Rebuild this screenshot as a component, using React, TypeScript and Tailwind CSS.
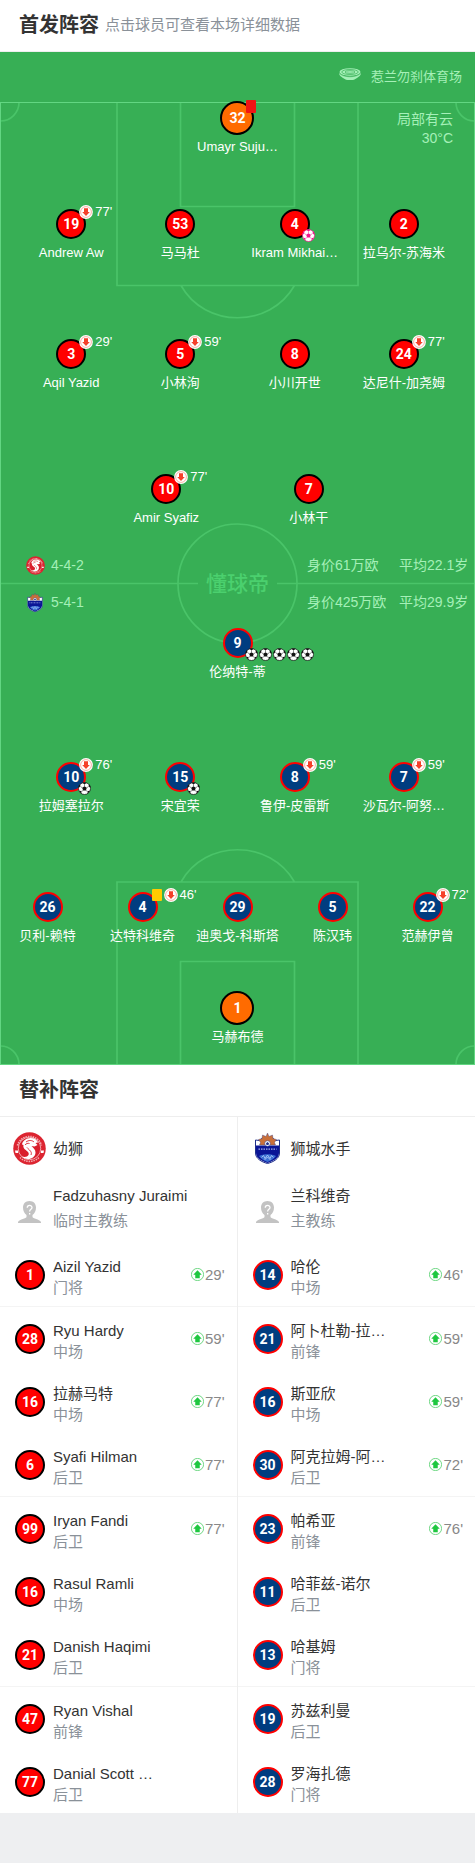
import React from 'react';

type Side = 'home' | 'away' | 'keeper';

interface Player {
  no: number;
  name: string;
  side: Side;
  card?: 'red' | 'yellow';
  off?: number;
  goals?: number;
  assistBall?: boolean;
}

interface Sub {
  no: number;
  name: string;
  role: string;
  on?: number;
}

const home = (no: number, name: string, extra: Partial<Player> = {}): Player => ({ no, name, side: 'home', ...extra });
const away = (no: number, name: string, extra: Partial<Player> = {}): Player => ({ no, name, side: 'away', ...extra });

const homeKeeper: Player = { no: 32, name: 'Umayr Suju…', side: 'keeper', card: 'red' };
const awayKeeper: Player = { no: 1, name: '马赫布德', side: 'keeper' };

const homeDefence = [
  home(19, 'Andrew Aw', { off: 77 }),
  home(53, '马马杜'),
  home(4, 'Ikram Mikhai…', { assistBall: true }),
  home(2, '拉乌尔-苏海米'),
];
const homeMidfield = [
  home(3, 'Aqil Yazid', { off: 29 }),
  home(5, '小林洵', { off: 59 }),
  home(8, '小川开世'),
  home(24, '达尼什-加尧姆', { off: 77 }),
];
const homeAttack = [home(10, 'Amir Syafiz', { off: 77 }), home(7, '小林干')];
const awayAttack = [away(9, '伦纳特-蒂', { goals: 5 })];
const awayMidfield = [
  away(10, '拉姆塞拉尔', { off: 76, goals: 1 }),
  away(15, '宋宜荣', { goals: 1 }),
  away(8, '鲁伊-皮雷斯', { off: 59 }),
  away(7, '沙瓦尔-阿努…', { off: 59 }),
];
const awayDefence = [
  away(26, '贝利-赖特'),
  away(4, '达特科维奇', { card: 'yellow', off: 46 }),
  away(29, '迪奥戈-科斯塔'),
  away(5, '陈汉玮'),
  away(22, '范赫伊曾', { off: 72 }),
];

const homeSubs: Sub[] = [
  { no: 1, name: 'Aizil Yazid', role: '门将', on: 29 },
  { no: 28, name: 'Ryu Hardy', role: '中场', on: 59 },
  { no: 16, name: '拉赫马特', role: '中场', on: 77 },
  { no: 6, name: 'Syafi Hilman', role: '后卫', on: 77 },
  { no: 99, name: 'Iryan Fandi', role: '后卫', on: 77 },
  { no: 16, name: 'Rasul Ramli', role: '中场' },
  { no: 21, name: 'Danish Haqimi', role: '后卫' },
  { no: 47, name: 'Ryan Vishal', role: '前锋' },
  { no: 77, name: 'Danial Scott …', role: '后卫' },
];
const awaySubs: Sub[] = [
  { no: 14, name: '哈伦', role: '中场', on: 46 },
  { no: 21, name: '阿卜杜勒-拉…', role: '前锋', on: 59 },
  { no: 16, name: '斯亚欣', role: '中场', on: 59 },
  { no: 30, name: '阿克拉姆-阿…', role: '后卫', on: 72 },
  { no: 23, name: '帕希亚', role: '前锋', on: 76 },
  { no: 11, name: '哈菲兹-诺尔', role: '后卫' },
  { no: 13, name: '哈基姆', role: '门将' },
  { no: 19, name: '苏兹利曼', role: '后卫' },
  { no: 28, name: '罗海扎德', role: '门将' },
];

const shirt: Record<Side, string> = {
  home: 'size-[30px] bg-[#ff0000] border-black',
  away: 'size-[30px] bg-[#003d80] border-[#ff0000]',
  keeper: 'size-[34px] bg-[#ff6b00] border-black',
};

function Shirt({ no, side }: { no: number; side: Side }) {
  return (
    <span
      className={`flex shrink-0 items-center justify-center rounded-full border-2 font-['Roboto','Liberation_Sans',sans-serif] text-[14px] leading-none font-bold text-white ${shirt[side]}`}
    >
      {no}
    </span>
  );
}

function Ball({ color = '#111111' }: { color?: string }) {
  return (
    <svg viewBox="0 0 26 26" className="size-[13px] shrink-0" aria-hidden="true">
      <circle cx="13" cy="13" r="12" fill="#fff" stroke={color} strokeWidth="1.4" />
      <g fill={color}>
        <path d="M13 8.4l4.6 3.3-1.8 5.4h-5.6l-1.8-5.4z" />
        <path d="M8.6 1.9L13 4.4l4.4-2.5C14.600 .8 11.400 .8 8.600 1.900z" />
        <path d="M24.900 11.500l-3.700-3 1-4.300c1.900 1.900 2.900 4.500 2.700 7.300z" />
        <path d="M1.100 11.500l3.700-3-1-4.300C1.900 6.100 .9 8.700 1.100 11.500z" />
        <path d="M19 23.400l.3-4.700 4.400-1.500c-.9 2.700-2.500 4.800-4.700 6.200z" />
        <path d="M7 23.400l-.3-4.700-4.400-1.500c.9 2.700 2.500 4.800 4.700 6.200z" />
      </g>
      <path
        d="M13 8.400v-4M17.600 11.700l3.600-3.200M15.800 17.100l3.500 1.600M10.200 17.100l-3.500 1.600M8.400 11.700L4.800 8.500"
        stroke={color}
        strokeWidth="1"
      />
    </svg>
  );
}

function OffIcon() {
  return (
    <svg viewBox="0 0 28 28" className="size-[14px] shrink-0" aria-hidden="true">
      <circle cx="14" cy="14" r="13.800" fill="#fff" />
      <circle cx="14" cy="14" r="10.800" fill="none" stroke="#f77a68" strokeWidth="1.200" />
      <path d="M10 6.500h8v7.500h3.500L14 22l-7.500-8H10z" fill="#f5402a" />
    </svg>
  );
}

function OnIcon() {
  return (
    <svg viewBox="0 0 26 26" className="size-[13px] shrink-0" aria-hidden="true">
      <circle cx="13" cy="13" r="12.200" fill="#fff" stroke="#27c346" strokeWidth="1.300" />
      <path d="M8.500 20.500h9V13.500h4L13 4.500l-8.500 9h4z" fill="#1fc740" />
    </svg>
  );
}

function PlayerPin({ player, className = '' }: { player: Player; className?: string }) {
  const keeper = player.side === 'keeper';
  return (
    <button type="button" className={`flex cursor-pointer flex-col items-center ${keeper ? 'gap-[3px]' : 'gap-[5px]'} ${className}`}>
      <span className="relative">
        <Shirt no={player.no} side={player.side} />
        {player.card === 'red' && <span className="absolute -top-px left-[26px] h-[13px] w-[10px] rounded-[1px] bg-[#f01414]" />}
        {(player.off || player.card === 'yellow') && (
          <span className="absolute -top-1 left-[23px] flex items-center gap-0.5">
            {player.card === 'yellow' && <span className="ml-px h-[12px] w-[10px] rounded-[1px] bg-[#ffcc00]" />}
            <OffIcon />
            <span className="text-[13px] leading-[12px] text-white">{player.off}'</span>
          </span>
        )}
        {(player.goals || player.assistBall) && (
          <span className="absolute -bottom-[3px] left-[22px] flex gap-px">
            {player.assistBall ? (
              <Ball color="#f0148c" />
            ) : (
              Array.from({ length: player.goals ?? 0 }, (_, i) => <Ball key={i} />)
            )}
          </span>
        )}
      </span>
      <span className="text-[13px] leading-[18px] whitespace-nowrap text-white">{player.name}</span>
    </button>
  );
}

function RowOfFour({ players, className }: { players: Player[]; className: string }) {
  return (
    <div className={`flex px-[3.5%] ${className}`}>
      {players.map((p, i) => (
        <PlayerPin key={p.no} player={p} className={i === 2 ? 'ml-auto w-[24.7%]' : 'w-[24.7%]'} />
      ))}
    </div>
  );
}

function LionsLogo({ className }: { className: string }) {
  return (
    <svg viewBox="0 0 66 66" className={className} aria-hidden="true">
      <circle cx="33" cy="33" r="32.500" fill="#dc2430" />
      <path d="M9 27a25 25 0 0 1 48 0" fill="none" stroke="#f3a9ae" strokeWidth="3.500" strokeDasharray="3 1.800" />
      <path d="M14 51a27 27 0 0 0 38 0" fill="none" stroke="#f3a9ae" strokeWidth="3" strokeDasharray="3 1.800" />
      <circle cx="33" cy="33" r="22.500" fill="#d91f2c" stroke="#fff" strokeWidth="1.200" />
      <path
        d="M18 25c1-7 8-13 17-13 8 0 13 4 15 9l-5 1 4 4-6 3-6-1c4 4 8 7 8 13 0 8-7 13-15 13-6 0-10-2-12-5 5 2 11 1 13-3 2-5-3-8-7-11-3-3-4-6-3-9z"
        fill="#fff"
      />
      <path d="M26 20c5-4 12-4 16 0M24 26c2-3 6-4 9-3M28 31c4 5 11 8 8 15" fill="none" stroke="#d91f2c" strokeWidth="1.800" />
      <path d="M4 37h6v5H5zM56 37h6l-1 5h-5z" fill="#fff" />
    </svg>
  );
}

function SailorsLogo({ className }: { className: string }) {
  return (
    <svg viewBox="0 0 50 62" className={className} aria-hidden="true">
      <path d="M1 14l8 1 6-5 10 3 10-3 6 5 8-1v26c0 11-12 18-24 21C13 58 1 51 1 40z" fill="#fff" stroke="#20308a" strokeWidth="2" />
      <path d="M25 0l3 7 7-3 1 7 7 2-4 6 2 5H9l2-5-4-6 7-2 1-7 7 3z" fill="#c9703a" stroke="#3b3f86" strokeWidth=".8" />
      <path d="M2 25h46v15c0 10-11 16-23 20C13 56 2 50 2 40z" fill="#0a1596" />
      <circle cx="25" cy="21" r="5.500" fill="#fff" stroke="#20308a" />
      <path d="M25 18l3 2.500-1 3.500h-4l-1-3.500z" fill="#26348d" />
      <path d="M7 32h36" stroke="#aab4ea" strokeWidth="2.500" strokeDasharray="3 2" />
      <path d="M8 46c9-5 25-5 34 0-4 6-11 10-17 12-6-2-13-6-17-12z" fill="#3a6ed2" />
      <path d="M13 49l4-4 3 6 5-7 5 7 3-6 4 4M19 54l6-6 6 6" fill="none" stroke="#bcd6ff" strokeWidth="1.500" />
    </svg>
  );
}

function CoachIcon() {
  return (
    <svg viewBox="0 0 46 44" className="h-[22px] w-[23px]" aria-hidden="true">
      <path
        d="M23 0c8 0 13 5.500 13 13 0 7-3 12-7 15v4c0 3 14 4 17 10v2H0v-2c3-6 17-7 17-10v-4c-4-3-7-8-7-15C10 5.500 15 0 23 0z"
        fill="#c3c3c3"
      />
      <path d="M18.500 13.500c0-6 9.500-6 9.500-.5 0 4-4.700 3.500-4.700 8M23.300 24v3" fill="none" stroke="#fff" strokeWidth="2.600" />
    </svg>
  );
}

function StadiumIcon() {
  return (
    <svg viewBox="0 0 44 24" className="mb-1.5 h-[12px] w-[22px]" aria-hidden="true">
      <path d="M0 9c0 5 3 8 8 11l6 3.500c5 .7 11 .7 16 0l6-3.500c5-3 8-6 8-11-3 5-12 8-22 8S3 14 0 9z" fill="#a5f0b8" />
      <ellipse cx="22" cy="8" rx="21" ry="7.500" fill="#a5f0b8" />
      <ellipse cx="22" cy="8" rx="16.500" ry="5" fill="none" stroke="#37af55" strokeWidth="1.400" />
      <ellipse cx="22" cy="8" rx="10" ry="2.600" fill="none" stroke="#37af55" strokeWidth="1.400" />
      <path d="M1 10.500c4 4.500 12 7 21 7s17-2.500 21-7" fill="none" stroke="#37af55" strokeWidth="1.200" />
    </svg>
  );
}

function PitchLines() {
  return (
    <svg
      viewBox="0 0 475 964"
      preserveAspectRatio="none"
      className="pointer-events-none absolute inset-0 h-full w-full"
      fill="none"
      stroke="#4ac469"
      strokeWidth="1.700"
      aria-hidden="true"
    >
      <path d="M117 1v183.500h241V1M180.500 1v104.500h114V1M181 184.500c24 43 89 43 113.500 0" />
      <path d="M117 963V781h241v182M180.500 963V860.500h114V963M181 781c24-43 89-43 113.500 0" />
      <path d="M19 1A18.500 18.500 0 0 1 0 20M456 1A18.500 18.500 0 0 0 475 20M19 963A18.500 18.500 0 0 0 0 945M456 963A18.500 18.500 0 0 1 475 945" />
      <path d="M1 482.500h197M277 482.500h197" />
      <circle cx="237.500" cy="482.500" r="59.500" />
      <rect x=".5" y="1.500" width="474" height="962" stroke="#62d682" strokeWidth="1" />
    </svg>
  );
}

function TeamFacts({ logo, formation, value, age, className }: { logo: React.ReactNode; formation: string; value: string; age: string; className: string }) {
  return (
    <div className={`flex h-5 items-center pr-1.5 pl-[25px] text-[14px] leading-5 text-[#a5f0b8] ${className}`}>
      <span className="flex w-5 justify-center">{logo}</span>
      <span className="ml-1.5 flex-1">{formation}</span>
      <span className="w-[92px]">{value}</span>
      <span className="w-[70px] whitespace-nowrap">{age}</span>
    </div>
  );
}

function SubRow({ sub, side }: { sub: Sub; side: Side }) {
  return (
    <li className="flex h-[63px] items-center pr-3 pl-[15px]">
      <Shirt no={sub.no} side={side} />
      <div className="min-w-0 flex-1 pt-1 pl-2 text-[15px] leading-[21px]">
        <p className="truncate text-[#333333]">{sub.name}</p>
        <p className="text-[#8a9199]">{sub.role}</p>
      </div>
      {sub.on && (
        <span className="flex items-center gap-px text-[15px] leading-5 text-[#888888]">
          <OnIcon />
          {sub.on}'
        </span>
      )}
    </li>
  );
}

function Bench({ team, logo, coach, coachRole, subs, side, className }: { team: string; logo: React.ReactNode; coach: string; coachRole: string; subs: Sub[]; side: Side; className: string }) {
  const groups = [subs.slice(0, 1), subs.slice(1, 4), subs.slice(4, 7), subs.slice(7)];
  return (
    <section className={className}>
      <h3 className="flex h-[63px] items-center pl-[13px] text-[15px] leading-[21px] text-[#333333]">
        <span className="flex w-[33px] justify-center">{logo}</span>
        <span className="pl-[7px]">{team}</span>
      </h3>
      <div className="flex h-[63px] items-start pl-[13px]">
        <span className="flex w-[33px] justify-center pt-[21px]">
          <CoachIcon />
        </span>
        <div className="pt-[3px] pl-[7px] text-[15px] leading-[25px]">
          <p className="text-[#333333]">{coach}</p>
          <p className="text-[#8a9199]">{coachRole}</p>
        </div>
      </div>
      {groups.map((group, i) => (
        <ul key={i} className="border-b border-[#f4f4f4] last:border-b-0">
          {group.map((s) => (
            <SubRow key={s.no} sub={s} side={side} />
          ))}
        </ul>
      ))}
    </section>
  );
}

export default function App() {
  return (
    <main className="min-h-screen bg-[#eeeff1] font-['Liberation_Sans','Noto_Sans_CJK_SC',sans-serif]">
      <header className="flex h-[52px] items-center gap-1.5 border-b border-[#eeeeee] bg-white pb-0.5 pl-[19px]">
        <h1 className="text-[20px] leading-7 font-bold text-[#333333]">首发阵容</h1>
        <p className="text-[15px] leading-6 text-[#8a9199]">点击球员可查看本场详细数据</p>
      </header>

      <section className="bg-[#37af55]">
        <div className="flex h-[49px] items-center justify-end gap-2.5 pr-[13px] text-[13px] leading-5 text-[#a5f0b8]">
          <StadiumIcon />
          <span>惹兰勿刹体育场</span>
        </div>

        <div className="relative pb-[19px]">
          <PitchLines />
          <p className="absolute top-[9px] right-[22px] text-right text-[14px] leading-[19px] text-[#a5f0b8]">
            局部有云
            <br />
            30°C
          </p>
          <div className="relative">
            <PlayerPin player={homeKeeper} className="mx-auto" />
            <RowOfFour players={homeDefence} className="mt-[53px]" />
            <RowOfFour players={homeMidfield} className="mt-[77px]" />
            <div className="mt-[82px] grid grid-cols-2 px-[20%]">
              {homeAttack.map((p) => (
                <PlayerPin key={p.no} player={p} />
              ))}
            </div>
            <div className="relative mt-7">
              <TeamFacts logo={<LionsLogo className="size-[19px]" />} formation="4-4-2" value="身价61万欧" age="平均22.1岁" className="" />
              <TeamFacts logo={<SailorsLogo className="h-[19px] w-4" />} formation="5-4-1" value="身价425万欧" age="平均29.9岁" className="mt-[17px]" />
              <span className="absolute inset-0 flex items-center justify-center text-[21px] leading-none font-medium text-[#4bd06e]">懂球帝</span>
            </div>
            <div className="mt-4 flex justify-center">
              {awayAttack.map((p) => (
                <PlayerPin key={p.no} player={p} />
              ))}
            </div>
            <RowOfFour players={awayMidfield} className="mt-[81px]" />
            <div className="mt-[77px] grid grid-cols-5">
              {awayDefence.map((p) => (
                <PlayerPin key={p.no} player={p} />
              ))}
            </div>
            <PlayerPin player={awayKeeper} className="mx-auto mt-[46px]" />
          </div>
        </div>
      </section>

      <header className="flex h-[52px] items-center border-b border-[#eeeeee] bg-white pb-0.5 pl-[19px]">
        <h2 className="text-[20px] leading-7 font-bold text-[#333333]">替补阵容</h2>
      </header>
      <div className="grid grid-cols-2 bg-white">
        <Bench team="幼狮" logo={<LionsLogo className="size-[33px]" />} coach="Fadzuhasny Juraimi" coachRole="临时主教练" subs={homeSubs} side="home" className="border-r border-[#eeeeee]" />
        <Bench team="狮城水手" logo={<SailorsLogo className="h-[31px] w-[25px]" />} coach="兰科维奇" coachRole="主教练" subs={awaySubs} side="away" className="" />
      </div>
    </main>
  );
}
